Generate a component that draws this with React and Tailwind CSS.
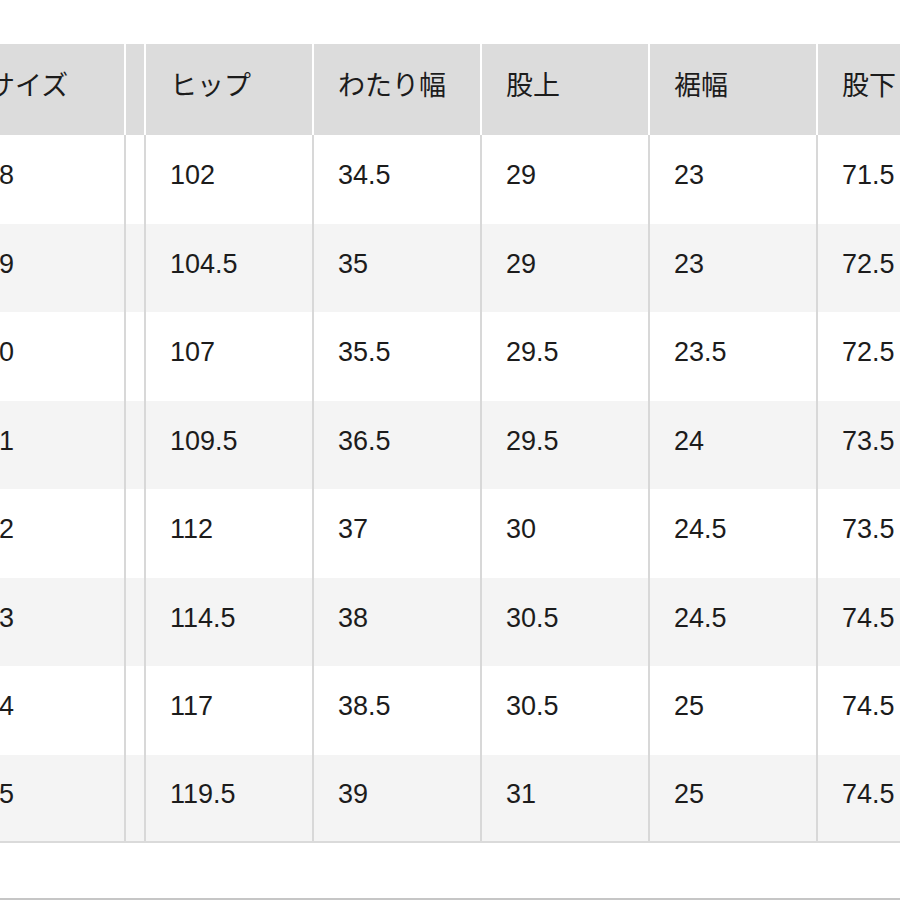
const HEADERS = ['ヒップ', 'わたり幅', '股上', '裾幅', '股下']

const ROWS = [
  ['28', '102', '34.5', '29', '23', '71.5'],
  ['29', '104.5', '35', '29', '23', '72.5'],
  ['30', '107', '35.5', '29.5', '23.5', '72.5'],
  ['31', '109.5', '36.5', '29.5', '24', '73.5'],
  ['32', '112', '37', '30', '24.5', '73.5'],
  ['33', '114.5', '38', '30.5', '24.5', '74.5'],
  ['34', '117', '38.5', '30.5', '25', '74.5'],
  ['35', '119.5', '39', '31', '25', '74.5'],
]

export default function App() {
  return (
    <div
      className="relative w-[900px] h-[900px] bg-white overflow-hidden text-[#1c1c1c] text-[27px]"
      style={{ fontFamily: '"Liberation Sans", "Noto Sans CJK JP", sans-serif' }}
    >
      <div className="pt-[44px] -ml-[38px] w-[1100px]">
        {/* ヘッダー */}
        <div className="flex h-[91px] bg-[#dcdcdc]">
          <div className="w-[164px] shrink-0 border-r-2 border-white flex items-center pl-[26px] pb-[6px]">
            サイズ
          </div>
          <div className="w-[20px] shrink-0 border-r-2 border-white" />
          {HEADERS.map(h => (
            <div
              key={h}
              className="w-[168px] shrink-0 border-r-2 border-white flex items-center pl-6 pb-[6px]"
            >
              {h}
            </div>
          ))}
        </div>

        {ROWS.map((r, i) => (
          <div
            key={r[0]}
            className={`flex h-[88.5px] ${i % 2 === 1 ? 'bg-[#f4f4f4]' : 'bg-white'} ${
              i === ROWS.length - 1 ? 'border-b-2 border-[#dadada]' : ''
            }`}
          >
            <div className="w-[164px] shrink-0 border-r-2 border-[#d8d8d8] flex items-center pl-[22px] pb-2">
              {r[0]}
            </div>
            <div className="w-[20px] shrink-0 border-r-2 border-[#d8d8d8]" />
            {r.slice(1).map((v, j) => (
              <div
                key={j}
                className="w-[168px] shrink-0 border-r-2 border-[#d8d8d8] flex items-center pl-6 pb-2"
              >
                {v}
              </div>
            ))}
          </div>
        ))}
      </div>

      <div className="absolute left-0 right-0 bottom-0 h-[2px] bg-[#c6c6c6]" />
    </div>
  )
}
